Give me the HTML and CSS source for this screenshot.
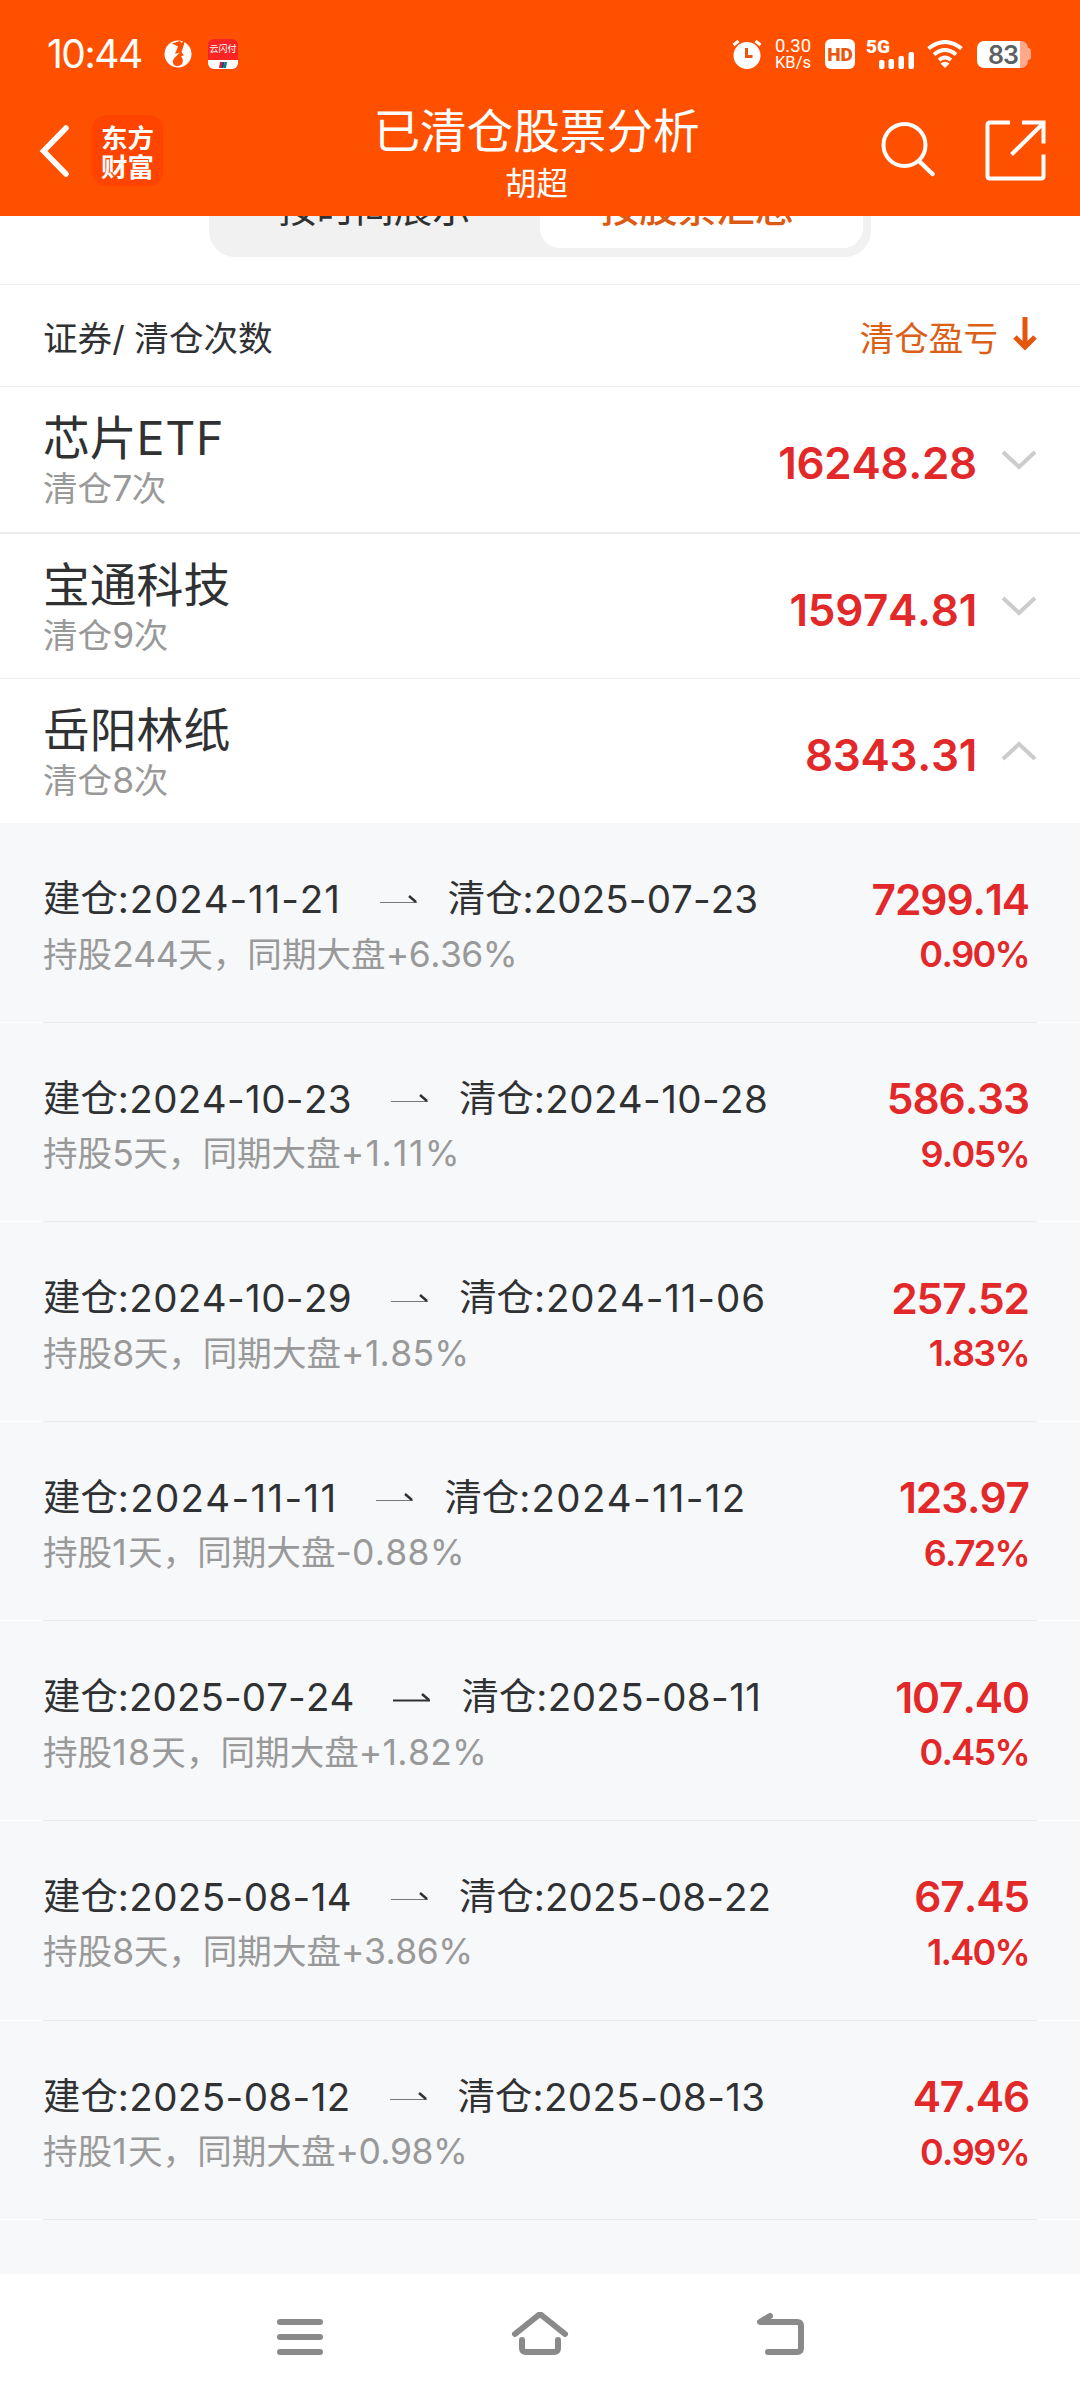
FILE: index.html
```html
<!DOCTYPE html>
<html lang="zh-CN">
<head>
<meta charset="utf-8">
<title>已清仓股票分析</title>
<link rel="stylesheet" href="styles.css">
</head>
<body>
<div class="screen">
  <header class="header">
    <div class="status">
      <div class="status-left">
        <span class="clock">10:44</span>
        <svg class="ico-flame" width="28" height="28" viewBox="0 0 28 28"><circle cx="14" cy="14" r="13.5" fill="#fff"/><path d="M8 3.500 16 1 17.500 3 20.500 0 20 4.500 17.500 12 20 15.500 17 16Q20 20 18 24 14 28 9.500 24.500 7 20 13 15.500L15.500 12.500 11 14 14 6.500Z" fill="#ff5000"/></svg>
        <div class="pay"><span class="pay-name">云闪付</span><svg class="pay-mark" width="8" height="6" viewBox="0 0 8 6"><path d="M1 0h3L3 6H0z" fill="#d8232f"/><path d="M3.500 0h2L4.500 6h-2z" fill="#17438a"/><path d="M5.500 0H8L7 6H4.500z" fill="#0b7b80"/></svg></div>
      </div>
      <div class="status-right">
        <svg width="30" height="30" viewBox="0 0 30 30"><circle cx="15" cy="16.500" r="13.500" fill="#fff"/><path d="M1.500 6 6.500 2M28.500 6l-5-4" stroke="#fff" stroke-width="3" fill="none"/><path d="M14.500 9v8.500h6" stroke="#e8570f" stroke-width="3" fill="none"/></svg>
        <div class="speed"><span>0.30</span><span class="unit">KB/s</span></div>
        <div class="hd">HD</div>
        <div class="signal"><span class="gen">5G</span><svg width="35" height="17" viewBox="0 0 35 17"><g fill="#fff"><rect x="0" y="8" width="5.500" height="9" rx="2"/><rect x="9.500" y="7" width="5.500" height="10" rx="2"/><rect x="19.500" y="4" width="5.500" height="13" rx="2"/><rect x="29.500" y="0" width="5.500" height="17" rx="2"/></g></svg></div>
        <svg class="wifi" width="36" height="28" viewBox="0 0 36 28"><g stroke="#fff" stroke-width="4" fill="none"><path d="M1.500 8.500Q18-4.500 34.500 8.500"/><path d="M7 14.500Q18 5.500 29 14.500"/><path d="M12 20Q18 15 24 20"/></g><path d="M13.500 23.500q4.500-3.500 9 0L18 28z" fill="#fff"/></svg>
        <div class="battery"><div class="cell">83</div><span class="tip"></span></div>
      </div>
    </div>
    <div class="bar">
      <div class="bar-left">
        <svg width="32" height="56" viewBox="0 0 32 56"><path d="M27 5 4.500 28 27 51" fill="none" stroke="#fff" stroke-width="5.500" stroke-linecap="round" stroke-linejoin="miter"/></svg>
        <div class="logo"><span>东方</span><span>财富</span></div>
      </div>
      <div class="titles"><h1>已清仓股票分析</h1><p>胡超</p></div>
      <div class="bar-right">
        <svg width="56" height="56" viewBox="0 0 56 56"><circle cx="24.500" cy="24" r="21" fill="none" stroke="#fff" stroke-width="4"/><path d="M39 40 52.500 53" stroke="#fff" stroke-width="4.500" stroke-linecap="round"/></svg>
        <svg width="61" height="61" viewBox="0 0 61 61"><g fill="none" stroke="#fff" stroke-width="4"><path d="M25 2.500H5Q2.500 2.500 2.500 5V56Q2.500 58.500 5 58.500H56Q58.500 58.500 58.500 56V34.500"/><path d="M37 2.500H58.500V23.500"/><path d="M26.500 34.500 58 3.500"/></g></svg>
      </div>
    </div>
  </header>

  <div class="tabs-area">
    <div class="tabs"><div class="tab">按时间展示</div><div class="tab active">按股票汇总</div></div>
  </div>

  <div class="list-head">
    <span>证券/ 清仓次数</span>
    <span class="sort">清仓盈亏<svg width="24" height="34" viewBox="0 0 24 34"><path d="M12 0V30M2 20 12 30 22 20" fill="none" stroke="#e4570c" stroke-width="5"/></svg></span>
  </div>

  <div class="stock">
    <div class="who"><div class="name">芯片<span class="latin">ETF</span></div><div class="times">清仓<span class="n">7</span>次</div></div>
    <div class="total">16248.28</div>
    <svg class="chev" width="36" height="20" viewBox="0 0 36 20"><path d="M2 2 18 17 34 2"/></svg>
  </div>
  <div class="stock second">
    <div class="who"><div class="name">宝通科技</div><div class="times">清仓<span class="n">9</span>次</div></div>
    <div class="total">15974.81</div>
    <svg class="chev" width="36" height="20" viewBox="0 0 36 20"><path d="M2 2 18 17 34 2"/></svg>
  </div>
  <div class="stock last">
    <div class="who"><div class="name">岳阳林纸</div><div class="times">清仓<span class="n">8</span>次</div></div>
    <div class="total">8343.31</div>
    <svg class="chev" width="36" height="20" viewBox="0 0 36 20"><path d="M2 18 18 3 34 18"/></svg>
  </div>

  <div class="details">
    <div class="trade">
      <div class="line"><div class="dates">建仓<span class="d loose">:2024-11-21</span><svg class="arrow" width="38" height="9" viewBox="0 0 38 9"><path class="thin" d="M0 7.500H37"/><path class="barb" d="M29 1 36 7"/></svg>清仓<span class="d tight">:2025-07-23</span></div><div class="amt">7299.14</div></div>
      <div class="line sub"><div class="note">持股<span class="n">244</span>天，同期大盘<span class="n">+6.36%</span></div><div class="pct">0.90%</div></div>
    </div>
    <div class="rule"></div>
    <div class="trade">
      <div class="line"><div class="dates">建仓<span class="d">:2024-10-23</span><svg class="arrow" width="38" height="9" viewBox="0 0 38 9"><path class="thin" d="M0 7.500H37"/><path class="barb" d="M29 1 36 7"/></svg>清仓<span class="d">:2024-10-28</span></div><div class="amt">586.33</div></div>
      <div class="line sub"><div class="note">持股<span class="n">5</span>天，同期大盘<span class="n wider">+1.11%</span></div><div class="pct">9.05%</div></div>
    </div>
    <div class="rule"></div>
    <div class="trade">
      <div class="line"><div class="dates">建仓<span class="d">:2024-10-29</span><svg class="arrow" width="38" height="9" viewBox="0 0 38 9"><path class="thin" d="M0 7.500H37"/><path class="barb" d="M29 1 36 7"/></svg>清仓<span class="d loose">:2024-11-06</span></div><div class="amt">257.52</div></div>
      <div class="line sub"><div class="note">持股<span class="n">8</span>天，同期大盘<span class="n wide">+1.85%</span></div><div class="pct">1.83%</div></div>
    </div>
    <div class="rule"></div>
    <div class="trade">
      <div class="line"><div class="dates">建仓<span class="d looser">:2024-11-11</span><svg class="arrow" width="38" height="9" viewBox="0 0 38 9"><path class="thin" d="M0 7.500H37"/><path class="barb" d="M29 1 36 7"/></svg>清仓<span class="d looser">:2024-11-12</span></div><div class="amt">123.97</div></div>
      <div class="line sub"><div class="note">持股<span class="n wider">1</span>天，同期大盘<span class="n wide">-0.88%</span></div><div class="pct">6.72%</div></div>
    </div>
    <div class="rule"></div>
    <div class="trade">
      <div class="line"><div class="dates">建仓<span class="d tight">:2025-07-24</span><svg class="arrow dark" width="38" height="9" viewBox="0 0 38 9"><path class="thin" d="M0 7.500H37"/><path class="barb" d="M29 1 36 7"/></svg>清仓<span class="d">:2025-08-11</span></div><div class="amt">107.40</div></div>
      <div class="line sub"><div class="note">持股<span class="n wider">18</span>天，同期大盘<span class="n wide">+1.82%</span></div><div class="pct">0.45%</div></div>
    </div>
    <div class="rule"></div>
    <div class="trade">
      <div class="line"><div class="dates">建仓<span class="d">:2025-08-14</span><svg class="arrow" width="38" height="9" viewBox="0 0 38 9"><path class="thin" d="M0 7.500H37"/><path class="barb" d="M29 1 36 7"/></svg>清仓<span class="d tight">:2025-08-22</span></div><div class="amt">67.45</div></div>
      <div class="line sub"><div class="note">持股<span class="n">8</span>天，同期大盘<span class="n">+3.86%</span></div><div class="pct">1.40%</div></div>
    </div>
    <div class="rule"></div>
    <div class="trade">
      <div class="line"><div class="dates">建仓<span class="d">:2025-08-12</span><svg class="arrow" width="38" height="9" viewBox="0 0 38 9"><path class="thin" d="M0 7.500H37"/><path class="barb" d="M29 1 36 7"/></svg>清仓<span class="d">:2025-08-13</span></div><div class="amt">47.46</div></div>
      <div class="line sub"><div class="note">持股<span class="n wider">1</span>天，同期大盘<span class="n">+0.98%</span></div><div class="pct">0.99%</div></div>
    </div>
    <div class="rule"></div>
  </div>

  <nav class="nav">
    <svg width="60" height="50" viewBox="0 0 60 50"><path d="M10 10H50M10 25H50M10 40H50"/></svg>
    <svg width="60" height="50" viewBox="0 0 60 50"><path d="M5 22 27.500 4Q30 1.500 32.500 4L55 22M12 28V36Q12 40 16 40H44Q48 40 48 36V28"/></svg>
    <svg width="60" height="50" viewBox="0 0 60 50"><path d="M20 4 10 10H47Q51 10 51 14V36Q51 40 47 40H18"/></svg>
  </nav>
</div>
</body>
</html>
```
FILE: styles.css
```css
* { box-sizing: border-box; }
body {
  margin: 0;
  background: #fff;
  font-family: Inter, "Noto Sans CJK SC", sans-serif;
  font-kerning: none;
  text-spacing-trim: space-all;
  color: #303133;
}
svg { display: block; flex: none; }
.screen {
  width: 1080px;
  height: 2400px;
  display: flex;
  flex-direction: column;
  overflow: hidden;
  white-space: nowrap;
}

/* header */
.header {
  position: relative;
  z-index: 1;
  flex: none;
  height: 216px;
  background: #ff5000;
  color: #fff;
}
.status {
  height: 108px;
  padding: 0 49px 0 47px;
  display: flex;
  justify-content: space-between;
  align-items: center;
}
.status-left, .status-right { display: flex; align-items: center; }
.clock {
  width: 117px;
  font-size: 39px;
  line-height: 44px;
  letter-spacing: -1.5px;
}
.ico-flame { margin-right: 16px; }
.pay {
  width: 30px;
  height: 30px;
  border-radius: 6px;
  background: linear-gradient(#f92525 21px, #fff 21px);
  display: flex;
  flex-direction: column;
  align-items: center;
  justify-content: space-between;
  padding: 3px 0 1px;
}
.pay-name { font-size: 9px; line-height: 13px; }
.speed {
  width: 38px;
  margin: 0 13px 0 12px;
  display: flex;
  flex-direction: column;
  align-items: center;
  font: 18.5px/16px Roboto, sans-serif;
}
.speed .unit { font-size: 16.5px; line-height: 17px; }
.hd {
  width: 30px;
  height: 30px;
  border-radius: 6px;
  background: #fff;
  color: #e8570f;
  font: 900 19px/31px Roboto, sans-serif;
  text-align: center;
}
.signal {
  width: 48px;
  height: 30px;
  margin-left: 11px;
  display: flex;
  flex-direction: column;
  justify-content: space-between;
}
.gen { font: 900 19px/15px Roboto, sans-serif; }
.signal svg { align-self: flex-end; margin-top: -2px; }
.wifi { margin: 0 14px 0 13px; }
.battery { display: flex; align-items: center; }
.cell {
  width: 51px;
  height: 27px;
  border-radius: 7px;
  background: linear-gradient(90deg, #fff 43px, #ffa98a 43px);
  color: #5c6062;
  font: 600 25px/28px Inter, sans-serif;
  letter-spacing: -1px;
  padding-left: 11px;
}
.tip { width: 3px; height: 12px; border-radius: 0 3px 3px 0; background: #ffa98a; }

.bar { height: 108px; display: grid; grid-template-columns: 1fr auto 1fr; }
.bar-left { display: flex; padding: 7px 0 0 39px; gap: 21px; }
.bar-left > svg { margin-top: 8px; }
.logo {
  width: 71px;
  height: 71px;
  border-radius: 14px;
  background: #ff4400;
  display: flex;
  flex-direction: column;
  align-items: center;
  justify-content: center;
  font: 700 26.5px/29px "Noto Sans CJK SC", sans-serif;
}
.titles { text-align: center; padding-right: 7px; margin-top: -5px; }
.titles h1 { margin: 0; font: 400 46.6px/50px "Noto Sans CJK SC", sans-serif; }
.titles p { margin: 8px 0 0; font: 400 31.5px/40px "Noto Sans CJK SC", sans-serif; }
.bar-right { display: flex; justify-content: flex-end; gap: 49px; padding: 12px 34px 0 0; }
.bar-right svg:first-child { margin-top: 1px; }

/* switcher */
.tabs-area { flex: none; height: 69px; border-bottom: 1px solid #ececec; }
.tabs {
  width: 662px;
  height: 96px;
  margin: -55px auto 0;
  padding: 9px 8px 9px 9px;
  border-radius: 26px;
  background: #f1f1f1;
  display: grid;
  grid-template-columns: 322px 323px;
}
.tab { border-radius: 20px; text-align: center; font-size: 38.6px; line-height: 76px; padding-right: 9px; }
.tab.active { background: #fff; color: #dc5a14; font-weight: 500; }

.list-head {
  flex: none;
  height: 102px;
  padding: 0 43px;
  border-bottom: 1px solid #ececec;
  display: flex;
  justify-content: space-between;
  align-items: center;
  font-size: 34.6px;
}
.sort { display: flex; align-items: center; gap: 15px; color: #dc5f18; }
.sort svg { margin-top: -3px; }

.stock {
  flex: none;
  height: 147px;
  padding: 0 43px;
  border-bottom: 2px solid #ececec;
  display: flex;
  align-items: center;
}
.stock.second { height: 145px; border-bottom-width: 1px; }
.stock.last { height: 144px; border-bottom: 0; }
.who { flex: 1; padding-top: 4px; }
.name { font-size: 46.8px; line-height: 54px; }
.latin { font-size: 46.6px; letter-spacing: 0.6px; }
.times { font-size: 34.6px; line-height: 46px; color: #999; }
.total { font-size: 44px; font-weight: 600; color: #e22828; line-height: 50px; padding-top: 7px; letter-spacing: -0.3px; }
.chev { margin-left: 24px; fill: none; stroke: #ccc; stroke-width: 4; }

/* trades */
.details { flex: 1; min-height: 0; background: #f7f8fa; }
.trade { height: 198.6px; padding: 48px 51px 0 43px; }
.line { display: flex; justify-content: space-between; align-items: center; height: 56px; }
.sub { height: 54px; }
.dates { display: flex; align-items: center; font-size: 37.4px; line-height: 56px; }
.d { font-size: 38.500px; letter-spacing: 0.4px; }
.d.tight { letter-spacing: 0.1px; }
.d.loose { letter-spacing: 0.9px; }
.d.looser { letter-spacing: 1.3px; }
.arrow { margin: 0 30px 0 39px; fill: none; }
.thin { stroke: #77797b; stroke-width: 1; }
.barb { stroke: #303133; stroke-width: 2.5; }
.dark .thin { stroke: #303133; stroke-width: 2; }
.note { font-size: 34.6px; line-height: 54px; color: #999; }
.n { font-size: 35.5px; letter-spacing: -0.5px; }
.n.wide { letter-spacing: 0.3px; }
.n.wider { letter-spacing: 1.4px; }
.amt { font-size: 42.5px; font-weight: 600; color: #e22828; letter-spacing: -1.1px; }
.pct { font-size: 36px; font-weight: 600; color: #e22828; letter-spacing: -1.7px; }
.rule { height: 1px; padding: 0 43px; background: #fff; }
.rule::before { content: ""; display: block; height: 1px; background: #ebecee; }

.nav {
  flex: none;
  height: 126px;
  padding: 38px 270px 0;
  background: #fff;
  display: flex;
  justify-content: space-between;
}
.nav svg { fill: none; stroke: #8a8a8a; stroke-width: 6; stroke-linecap: round; stroke-linejoin: round; }
```
